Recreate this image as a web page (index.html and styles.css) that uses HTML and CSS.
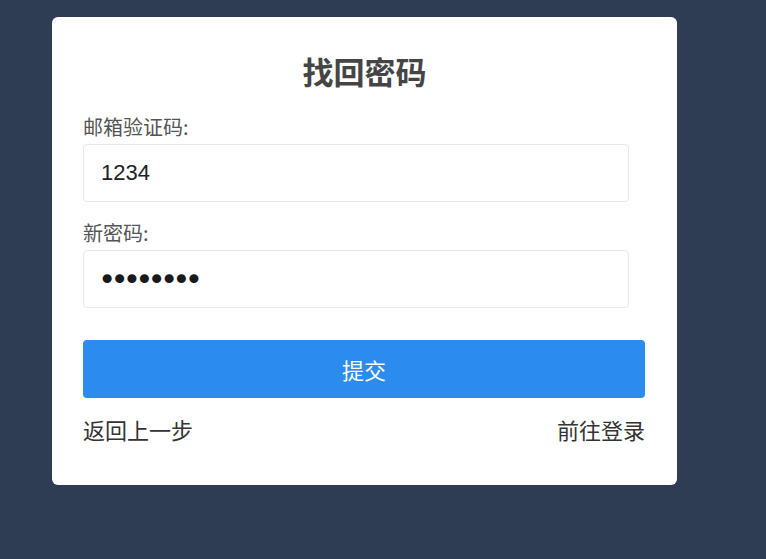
FILE: index.html
```html
<!DOCTYPE html>
<html lang="zh">
<head>
<meta charset="utf-8">
<title>找回密码</title>
<link rel="stylesheet" href="styles.css">
</head>
<body>
<div class="page">
  <div class="card">
    <h1 class="title">找回密码</h1>
    <label class="label" for="code">邮箱验证码:</label>
    <input class="field" id="code" type="text" value="1234">
    <label class="label label-second" for="pwd">新密码:</label>
    <input class="field field-pwd" id="pwd" type="password" value="12345678">
    <button class="submit" type="button">提交</button>
    <div class="links">
      <a class="link">返回上一步</a>
      <a class="link">前往登录</a>
    </div>
  </div>
</div>
</body>
</html>
```
FILE: styles.css
```css
* { box-sizing: border-box; }
html, body {
  margin: 0;
  height: 100%;
  background: #2e3d54;
  font-family: "Noto Sans CJK SC", "Noto Sans", sans-serif;
}
.page {
  padding: 17px 0 0 52px;
}
.card {
  width: 625px;
  height: 468px;
  background: #ffffff;
  border-radius: 6px;
  padding: 35px 32px 0 31px;
  display: flex;
  flex-direction: column;
  align-items: flex-start;
}
.title {
  align-self: stretch;
  margin: 0;
  text-align: center;
  font-size: 31px;
  line-height: 38px;
  font-weight: 700;
  color: #454545;
  padding-left: 1px;
}
.label {
  margin-top: 24px;
  font-size: 20px;
  line-height: 26px;
  color: #555555;
}
.label-second {
  margin-top: 18px;
}
.field {
  margin-top: 4px;
  width: 546px;
  height: 58px;
  border: 1px solid #e8e8e8;
  border-radius: 4px;
  padding: 0 17px;
  font-family: "Liberation Sans", Arial, sans-serif;
  font-size: 22px;
  color: #222222;
  background: #ffffff;
  outline: none;
}
.field-pwd {
  font-family: "DejaVu Sans", sans-serif;
  font-size: 31px;
  letter-spacing: -5.9px;
  padding-left: 14px;
  color: #1a1a1a;
}
.submit {
  margin-top: 32px;
  align-self: stretch;
  height: 58px;
  border: none;
  border-radius: 4px;
  background: #2b8bee;
  color: #ffffff;
  font-family: "Noto Sans CJK SC", sans-serif;
  font-size: 22px;
}
.links {
  margin-top: 16px;
  align-self: stretch;
  display: flex;
  justify-content: space-between;
}
.link {
  font-size: 22px;
  line-height: 30px;
  color: #333333;
}
```
